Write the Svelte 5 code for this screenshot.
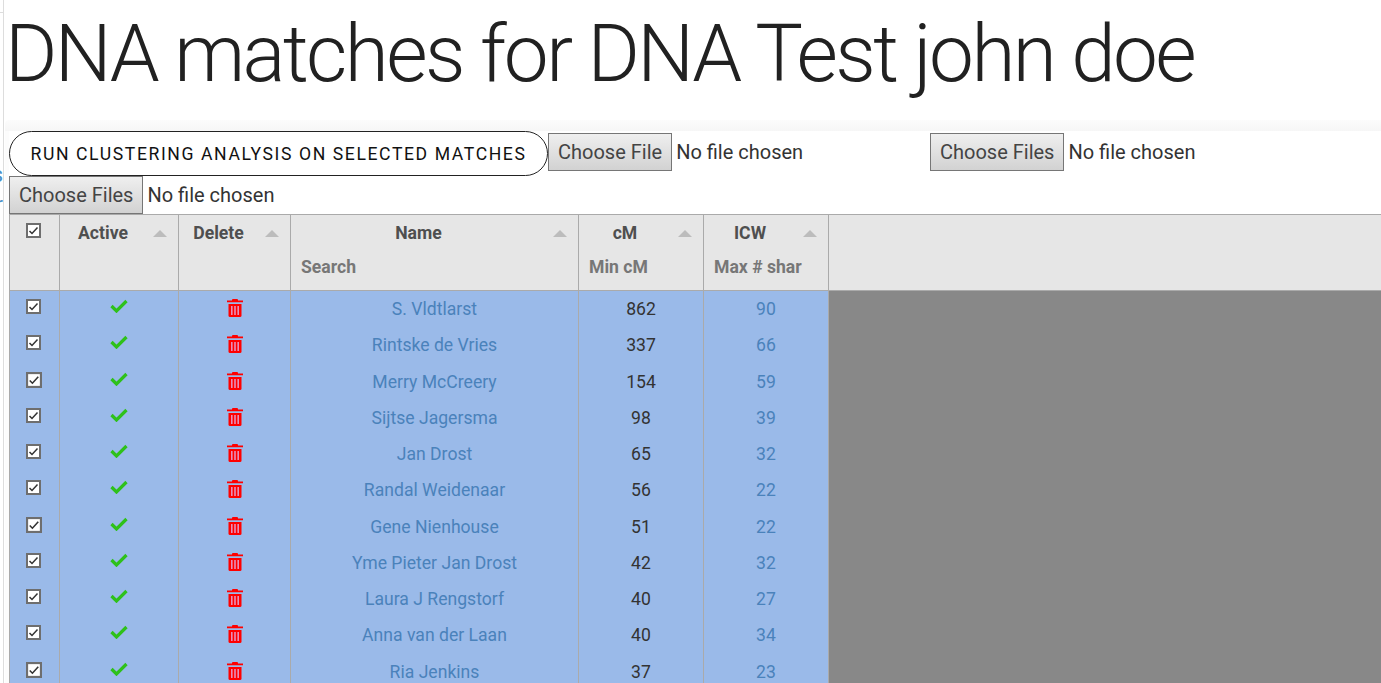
<script>
    const rows = [
        { name: 'S. Vldtlarst', cm: 862, icw: 90 },
        { name: 'Rintske de Vries', cm: 337, icw: 66 },
        { name: 'Merry McCreery', cm: 154, icw: 59 },
        { name: 'Sijtse Jagersma', cm: 98, icw: 39 },
        { name: 'Jan Drost', cm: 65, icw: 32 },
        { name: 'Randal Weidenaar', cm: 56, icw: 22 },
        { name: 'Gene Nienhouse', cm: 51, icw: 22 },
        { name: 'Yme Pieter Jan Drost', cm: 42, icw: 32 },
        { name: 'Laura J Rengstorf', cm: 40, icw: 27 },
        { name: 'Anna van der Laan', cm: 40, icw: 34 },
        { name: 'Ria Jenkins', cm: 37, icw: 23 }
    ];
</script>

{#snippet checkbox(big)}
    <svg class="check-box" class:big viewBox="0 0 15 15" aria-hidden="true">
        <rect x="1" y="1" width="13" height="13" fill="#fff" stroke="#6e6e6e" stroke-width="2" />
        <path d="M3.5 8 L6 10.5 L11.5 4.5" fill="none" stroke="#333" stroke-width="1.5" />
    </svg>
{/snippet}

<div class="page">
    <aside class="side">
        <div class="side-rule"></div>
        <span class="side-link">s</span>
        <span class="side-link">r</span>
    </aside>
    <main class="content">
        <h1>DNA matches for DNA Test john doe</h1>
        <section class="card">
            <div class="toolbar">
                <button class="run-btn">Run clustering analysis on selected matches</button>
                <input class="file first" type="file" />
                <input class="file second" type="file" multiple />
                <input class="file" type="file" multiple />
            </div>
            <table>
                <colgroup>
                    <col style="width:50px" />
                    <col style="width:119px" />
                    <col style="width:112px" />
                    <col style="width:288px" />
                    <col style="width:125px" />
                    <col style="width:125px" />
                    <col />
                </colgroup>
                <thead>
                    <tr class="titles">
                        <th class="box-cell">{@render checkbox(false)}</th>
                        <th class="sort">Active</th>
                        <th class="sort">Delete</th>
                        <th class="sort">Name</th>
                        <th class="sort">cM</th>
                        <th class="sort">ICW</th>
                        <th class="filler"></th>
                    </tr>
                    <tr class="filters">
                        <th></th>
                        <th></th>
                        <th></th>
                        <th>Search</th>
                        <th>Min cM</th>
                        <th>Max # shar</th>
                        <th class="filler"></th>
                    </tr>
                </thead>
                <tbody>
                    {#each rows as r, i}
                        <tr>
                            <td class="box-cell">{@render checkbox(i % 4 === 2)}</td>
                            <td>
                                <svg class="tick" viewBox="0 0 18 14" aria-hidden="true">
                                    <path d="M1.5 7 L6.5 12 L16.5 2" fill="none" stroke="#2ec11a" stroke-width="3.2" />
                                </svg>
                            </td>
                            <td>
                                <svg class="trash" viewBox="0 0 16 18" aria-hidden="true">
                                    <path d="M5 1a1 1 0 0 1 1-1h4a1 1 0 0 1 1 1v.6h5v1.600H0V1.600h5z" fill="#f00" />
                                    <path d="M1.500 5h13v11.500a1.500 1.500 0 0 1-1.500 1.500H3a1.500 1.500 0 0 1-1.500-1.500z" fill="#f00" />
                                    <path d="M4 7h1.600v9H4zM7.200 7h1.600v9H7.200zM10.400 7H12v9h-1.600z" fill="#e78fb8" />
                                </svg>
                            </td>
                            <td class="link">{r.name}</td>
                            <td class="num">{r.cm}</td>
                            <td class="link">{r.icw}</td>
                            <td class="rest"></td>
                        </tr>
                    {/each}
                </tbody>
            </table>
        </section>
    </main>
</div>

<style>
    :global(body) { overflow: hidden; background: #fff; font-family: Roboto, sans-serif; }
    .page { display: flex; height: 683px; overflow: hidden; }

    .side { width: 3px; flex-shrink: 0; border-right: 1px solid #ddd; overflow: hidden; direction: rtl; }
    .side-rule { height: 1px; margin: 12px 0 147px; background: #ddd; }
    .side-link { display: block; color: #4a90c8; font-size: 22px; line-height: 30px; }

    .content { flex: 1; min-width: 0; }
    h1 { margin: 0; padding-left: 1px; height: 120px; font-weight: 300; font-size: 80px; letter-spacing: -2.56px; line-height: 108px; color: #212121; white-space: nowrap; }

    .card { padding: 11px 0 0 4px; margin-left: 1px; background: linear-gradient(#fcfcfc, #f6f6f6 11px, #fcfcfc 11px); border-top-left-radius: 4px; }

    .toolbar { display: flex; flex-wrap: wrap; align-items: flex-start; width: 1400px; background: #fff; }
    .run-btn {
        width: 539px; height: 45px; box-sizing: border-box; padding: 0;
        background: #fff; border: 1px solid #222; border-radius: 23px;
        font-family: Roboto, sans-serif; font-size: 17.6px; letter-spacing: 1.6px; text-transform: uppercase; color: #111;
    }
    .file { font-family: Roboto, sans-serif; font-size: 20px; color: #333; }
    .file.first { width: 382px; margin-top: 2px; }
    .file.second { margin-top: 2px; }
    .file::file-selector-button {
        height: 38px; padding: 0 9px; margin-right: 4px;
        font: inherit; color: #444;
        background: linear-gradient(#efefef, #d2d2d2);
        border: 1px solid #767676; border-radius: 0;
    }
    .toolbar .file:last-child { flex-basis: 100%; }

    table { width: 1400px; table-layout: fixed; border-collapse: collapse; font-size: 17.6px; }
    th, td { border: 1px solid #aaa; padding: 0; }

    thead th { box-sizing: border-box; background: #e6e6e6; font-size: 17.6px; font-weight: 700; color: #4f4f4f; }
    .titles th { height: 36px; border-bottom: 0; position: relative; text-align: center; padding-right: 32px; }
    .titles th.box-cell { padding-right: 0; }
    .filters th { height: 40px; border-top: 0; color: #777; text-align: left; padding: 0 0 7px 10px; }
    .filler { border-right: 0; }
    .sort::after {
        content: ""; position: absolute; top: 15px; right: 11px;
        border-left: 7.500px solid transparent; border-right: 7.500px solid transparent; border-bottom: 7px solid #bcbcbc;
    }

    tbody td { height: 36.25px; background: #9abae9; text-align: center; border-top: 0; border-bottom: 0; }
    tbody td.rest { background: #888; border: 0; }
    .link { color: #4a82bb; }
    .num { color: #333; }

    .box-cell { vertical-align: top; }
    .check-box { display: block; width: 15px; height: 15px; margin: 8px 0 0 16px; }
    .check-box.big { width: 16px; height: 16px; }
    .tick { display: block; width: 18px; height: 14px; margin: -6px auto 0; }
    .trash { display: block; width: 16px; height: 18px; margin: -2px auto 0; }
</style>
